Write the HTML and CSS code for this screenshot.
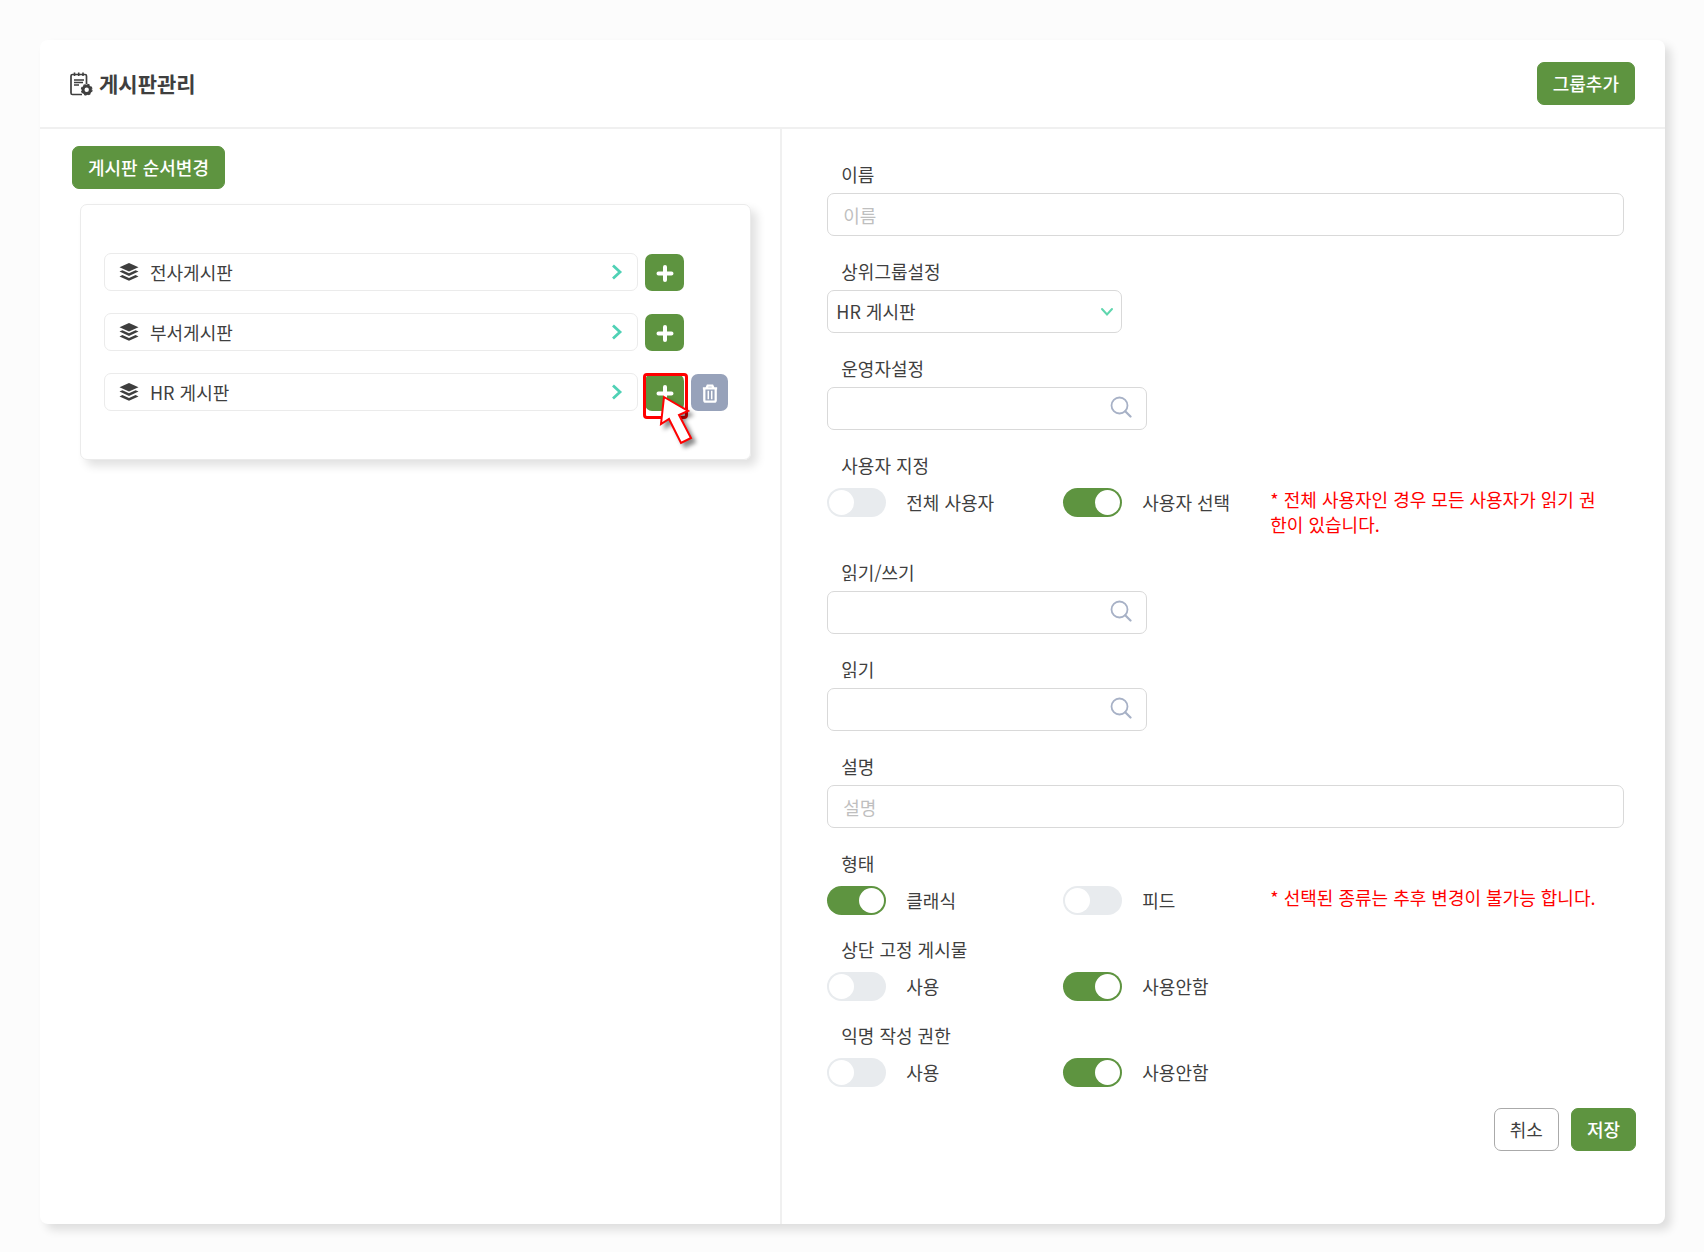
FILE: index.html
```html
<!DOCTYPE html>
<html lang="ko">
<head>
  <meta charset="UTF-8">
  <meta name="viewport" content="width=device-width, initial-scale=1.0">
  <title>게시판관리</title>
  <link rel="stylesheet" href="styles.css">
</head>
<body>
  <!-- 공통 아이콘 -->
  <svg class="sprite" aria-hidden="true">
    <symbol id="icon-layers" viewBox="0 0 20 20">
      <path d="M10 1L19.5 5.2L10 9.6L.5 5.2Z"/>
      <path d="M.5 9.6L3.4 8.2L10 11.2L16.6 8.2L19.5 9.6L10 14Z"/>
      <path d="M.5 14.4L3.4 13L10 16L16.6 13L19.5 14.4L10 18.8Z"/>
    </symbol>
    <symbol id="icon-arrow" viewBox="0 0 12 16">
      <path d="M2 1.5L9 8L2 14.5" fill="none" stroke="currentColor" stroke-width="2.8"/>
    </symbol>
    <symbol id="icon-plus" viewBox="0 0 18 18">
      <path d="M9 2.5V15.5M2.5 9H15.5" fill="none" stroke="currentColor" stroke-width="4" stroke-linecap="round"/>
    </symbol>
    <symbol id="icon-search" viewBox="0 0 22 22">
      <circle cx="9.5" cy="9.5" r="8" fill="none" stroke="currentColor" stroke-width="1.8"/>
      <path d="M15.2 15.2L20.5 20.5" fill="none" stroke="currentColor" stroke-width="2.2" stroke-linecap="round"/>
    </symbol>
  </svg>

  <main class="card">
    <header class="card-header">
      <h1 class="title">
        <svg class="title-icon" viewBox="0 0 23 24" aria-hidden="true">
          <path d="M12 22.5H2.5Q1 22.5 1 21V4Q1 2.5 2.5 2.5H15Q16.5 2.5 16.5 4V12" fill="none" stroke="currentColor" stroke-width="1.7"/>
          <path d="M4.5 .5V4M8.7 .5V4M13 .5V4" stroke="currentColor" stroke-width="1.6"/>
          <path d="M4 8H14M4 10.5H13M4 13H9" stroke="currentColor" stroke-width="1.5"/>
          <circle cx="16.7" cy="17.7" r="3.7" fill="#fff" stroke="currentColor" stroke-width="3"/>
          <circle cx="16.7" cy="17.7" r="5.3" fill="none" stroke="currentColor" stroke-width="1.2" stroke-dasharray="2.4 1.76"/>
        </svg>
        게시판관리
      </h1>
      <button type="button" class="btn btn-green">그룹추가</button>
    </header>

    <div class="card-body">
      <section class="board-side">
        <button type="button" class="btn btn-green">게시판 순서변경</button>
        <ul class="board-list">
          <li class="board-row">
            <button type="button" class="board-item">
              <svg class="layers" aria-hidden="true"><use href="#icon-layers"/></svg>
              <span class="board-name">전사게시판</span>
              <svg class="arrow" aria-hidden="true"><use href="#icon-arrow"/></svg>
            </button>
            <div class="board-actions">
              <button type="button" class="icon-btn add" aria-label="추가"><svg aria-hidden="true"><use href="#icon-plus"/></svg></button>
            </div>
          </li>
          <li class="board-row">
            <button type="button" class="board-item">
              <svg class="layers" aria-hidden="true"><use href="#icon-layers"/></svg>
              <span class="board-name">부서게시판</span>
              <svg class="arrow" aria-hidden="true"><use href="#icon-arrow"/></svg>
            </button>
            <div class="board-actions">
              <button type="button" class="icon-btn add" aria-label="추가"><svg aria-hidden="true"><use href="#icon-plus"/></svg></button>
            </div>
          </li>
          <li class="board-row">
            <button type="button" class="board-item">
              <svg class="layers" aria-hidden="true"><use href="#icon-layers"/></svg>
              <span class="board-name">HR 게시판</span>
              <svg class="arrow" aria-hidden="true"><use href="#icon-arrow"/></svg>
            </button>
            <div class="board-actions">
              <button type="button" class="icon-btn add" aria-label="추가"><svg aria-hidden="true"><use href="#icon-plus"/></svg></button>
              <button type="button" class="icon-btn delete" aria-label="삭제">
                <svg viewBox="0 0 18 20" aria-hidden="true">
                  <path d="M1.5 4.5H16.5M5.5 4L6.5 1.8H11.5L12.5 4" fill="none" stroke="currentColor" stroke-width="2.4"/>
                  <path d="M3 5V17Q3 18.5 4.5 18.5H13.5Q15 18.5 15 17V5" fill="none" stroke="currentColor" stroke-width="2.4"/>
                  <path d="M7.2 7V16M10.8 7V16" stroke="currentColor" stroke-width="1.6"/>
                </svg>
              </button>
              <span class="focus-box"></span>
              <svg class="pointer" viewBox="0 0 42 56" aria-hidden="true">
                <path d="M9 4L33 18L24 22L36 45L26 50L14 26L6 31Z" fill="#fff" stroke="#f00" stroke-width="2"/>
              </svg>
            </div>
          </li>
        </ul>
      </section>

      <form class="board-form">
        <div class="field">
          <label class="field-label" for="name">이름</label>
          <input type="text" class="text-box" id="name" placeholder="이름">
        </div>
        <div class="field">
          <label class="field-label" for="parent">상위그룹설정</label>
          <div class="select-box">
            <select id="parent">
              <option>전사게시판</option>
              <option>부서게시판</option>
              <option selected>HR 게시판</option>
            </select>
            <svg class="select-arrow" viewBox="0 0 14 10" aria-hidden="true">
              <path d="M2 2L7 7.5L12 2" fill="none" stroke="currentColor" stroke-width="2" stroke-linecap="round"/>
            </svg>
          </div>
        </div>
        <div class="field">
          <label class="field-label" for="manager">운영자설정</label>
          <div class="search-box">
            <input type="text" id="manager">
            <button type="button" aria-label="검색"><svg aria-hidden="true"><use href="#icon-search"/></svg></button>
          </div>
        </div>
        <fieldset class="field">
          <legend class="field-label">사용자 지정</legend>
          <div class="toggle-row">
            <label class="toggle"><input type="radio" name="target">전체 사용자</label>
            <label class="toggle"><input type="radio" name="target" checked>사용자 선택</label>
            <p class="note">* 전체 사용자인 경우 모든 사용자가 읽기 권한이 있습니다.</p>
          </div>
        </fieldset>
        <div class="field">
          <label class="field-label" for="write">읽기/쓰기</label>
          <div class="search-box">
            <input type="text" id="write">
            <button type="button" aria-label="검색"><svg aria-hidden="true"><use href="#icon-search"/></svg></button>
          </div>
        </div>
        <div class="field">
          <label class="field-label" for="read">읽기</label>
          <div class="search-box">
            <input type="text" id="read">
            <button type="button" aria-label="검색"><svg aria-hidden="true"><use href="#icon-search"/></svg></button>
          </div>
        </div>
        <div class="field">
          <label class="field-label" for="desc">설명</label>
          <input type="text" class="text-box" id="desc" placeholder="설명">
        </div>
        <fieldset class="field compact">
          <legend class="field-label">형태</legend>
          <div class="toggle-row">
            <label class="toggle"><input type="radio" name="type" checked>클래식</label>
            <label class="toggle"><input type="radio" name="type">피드</label>
            <p class="note">* 선택된 종류는 추후 변경이 불가능 합니다.</p>
          </div>
        </fieldset>
        <fieldset class="field compact">
          <legend class="field-label">상단 고정 게시물</legend>
          <div class="toggle-row">
            <label class="toggle"><input type="radio" name="pin">사용</label>
            <label class="toggle"><input type="radio" name="pin" checked>사용안함</label>
          </div>
        </fieldset>
        <fieldset class="field compact">
          <legend class="field-label">익명 작성 권한</legend>
          <div class="toggle-row">
            <label class="toggle"><input type="radio" name="anonymous">사용</label>
            <label class="toggle"><input type="radio" name="anonymous" checked>사용안함</label>
          </div>
        </fieldset>
        <div class="form-buttons">
          <button type="button" class="btn btn-line">취소</button>
          <button type="submit" class="btn btn-green">저장</button>
        </div>
      </form>
    </div>
  </main>
</body>
</html>
```
FILE: styles.css
```css
* {
  box-sizing: border-box;
}
body {
  margin: 0;
  padding: 40px 39px 30px 40px;
  background: #fcfcfc;
  color: #3f3f3f;
  font-family: "Noto Sans CJK KR", sans-serif;
  font-size: 18px;
  line-height: 27px;
}
button, input, select {
  font: inherit;
  color: inherit;
}
button {
  cursor: pointer;
}
.sprite {
  display: none;
}

/* 카드 */
.card {
  background: #fff;
  border-radius: 8px;
  box-shadow: 6px 6px 10px rgba(0, 0, 0, 0.12);
}
.card-header {
  display: flex;
  align-items: center;
  justify-content: space-between;
  height: 89px;
  padding: 0 30px;
  border-bottom: 2px solid #f0f0f0;
}
.title {
  display: flex;
  align-items: center;
  gap: 6px;
  margin: 0;
  font-size: 21px;
  font-weight: 700;
}
.title-icon {
  width: 23px;
  height: 24px;
}
.card-body {
  display: flex;
}

/* 버튼 */
.btn {
  height: 43px;
  padding: 0 15px;
  border: 1px solid #5e9440;
  border-radius: 7px;
}
.btn-green {
  background: #5e9440;
  color: #fff;
  font-weight: 500;
}
.btn-line {
  background: #fff;
  border-color: #aaa;
}

/* 게시판 목록 */
.board-side {
  flex: 21 0 0;
  padding: 17px 29px 40px 32px;
  border-right: 2px solid #f0f0f0;
}
.board-list {
  display: flex;
  flex-direction: column;
  gap: 22px;
  margin: 15px 0 0 8px;
  padding: 48px 22px 48px 23px;
  list-style: none;
  border: 1px solid #ebebeb;
  border-radius: 7px;
  box-shadow: 6px 6px 10px rgba(0, 0, 0, 0.12);
}
.board-row {
  display: flex;
  gap: 7px;
}
.board-item {
  flex: 1;
  display: flex;
  align-items: center;
  height: 38px;
  padding: 0 14px;
  background: #fff;
  border: 1px solid #ebebeb;
  border-radius: 7px;
  text-align: left;
}
.board-name {
  flex: 1;
  margin-left: 11px;
}
.layers {
  width: 20px;
  height: 20px;
  fill: currentColor;
}
.arrow {
  width: 12px;
  height: 16px;
  color: #4fd1b5;
}
.board-actions {
  position: relative;
  display: flex;
  align-items: flex-end;
  gap: 7px;
  width: 83px;
}
.icon-btn {
  display: flex;
  align-items: center;
  justify-content: center;
  width: 37px;
  height: 37px;
  padding: 2px 0 0;
  border: 0;
  border-radius: 7px;
  color: #fff;
}
.icon-btn svg {
  width: 18px;
  height: 19px;
}
.icon-btn.add {
  width: 39px;
  background: #5e9440;
}
.icon-btn.delete {
  background: #97a2ba;
}
.focus-box {
  position: absolute;
  left: -2px;
  top: 0;
  width: 45px;
  height: 46px;
  border: 3px solid #f00;
  border-radius: 4px;
}
.pointer {
  position: absolute;
  left: 10px;
  top: 20px;
  width: 42px;
  height: 56px;
  filter: drop-shadow(4px 4px 2px rgba(0, 0, 0, 0.45));
}

/* 입력 폼 */
.board-form {
  flex: 25 0 0;
  padding: 32px 29px 73px 45px;
}
.field {
  margin: 0 12px 22px 0;
  padding: 0;
  border: 0;
}
.field.compact {
  margin-bottom: 21px;
}
.field-label {
  display: block;
  margin-bottom: 5px;
  padding: 0 14px;
}
.text-box, .select-box, .search-box {
  height: 43px;
  background: #fff;
  border: 1px solid #d9d9d9;
  border-radius: 7px;
}
.text-box {
  display: block;
  width: 100%;
  padding: 0 15px;
}
.text-box::placeholder {
  color: #bfbfbf;
}
.select-box {
  position: relative;
  width: 37%;
}
.select-box select {
  width: 100%;
  height: 100%;
  padding: 0 36px 0 8px;
  background: none;
  border: 0;
  appearance: none;
}
.select-arrow {
  position: absolute;
  right: 7px;
  top: 16px;
  width: 14px;
  height: 10px;
  color: #5fd6ae;
  pointer-events: none;
}
.search-box {
  display: flex;
  width: 320px;
}
.search-box input {
  flex: 1;
  min-width: 0;
  padding: 0 15px;
  background: none;
  border: 0;
}
.search-box button {
  height: 37px;
  padding: 0 14px;
  background: none;
  border: 0;
  color: #a7b1c6;
}
.search-box svg {
  display: block;
  width: 22px;
  height: 22px;
}

/* 토글 */
.toggle-row {
  display: grid;
  grid-template-columns: 236px 207px 1fr;
}
.toggle {
  display: flex;
  align-items: center;
  gap: 20px;
  height: 29px;
  margin-top: 4px;
}
.toggle input {
  appearance: none;
  width: 59px;
  height: 29px;
  margin: 0;
  padding: 2px;
  background: #e8ebee;
  border-radius: 15px;
}
.toggle input::before {
  content: "";
  display: block;
  width: 25px;
  height: 25px;
  background: #fff;
  border-radius: 50%;
}
.toggle input:checked {
  background: #5e9440;
}
.toggle input:checked::before {
  margin-left: auto;
}
.note {
  margin: 3px 20px 0 0;
  color: #f00;
  line-height: 25px;
  word-break: break-all;
}
.form-buttons {
  display: flex;
  justify-content: flex-end;
  gap: 12px;
}
```
